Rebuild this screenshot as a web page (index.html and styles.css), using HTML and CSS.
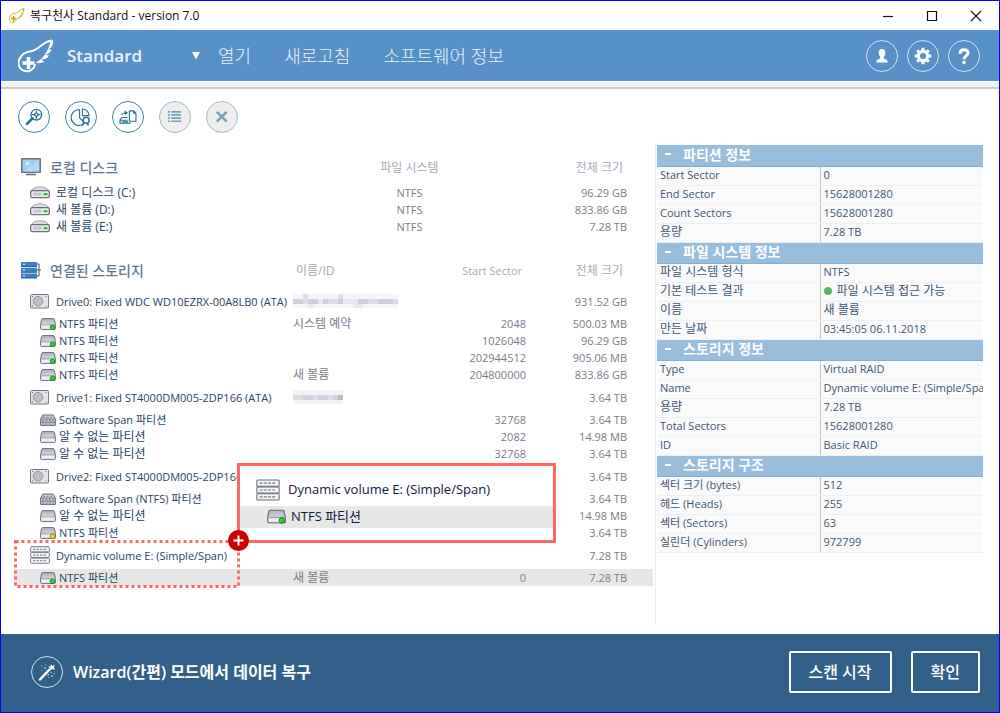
FILE: index.html
```
<!DOCTYPE html>
<html lang="ko">
<head>
<meta charset="utf-8">
<title>복구천사 Standard - version 7.0</title>
<link rel="stylesheet" href="styles.css">
</head>
<body>
<svg class="sprite" aria-hidden="true">
  <defs>
    <linearGradient id="metal" x1="0" y1="0" x2="0" y2="1"><stop offset="0" stop-color="#aab1bb"/><stop offset=".65" stop-color="#d9dce2"/><stop offset="1" stop-color="#e8eaee"/></linearGradient>
  </defs>
  <symbol id="wing" viewBox="0 0 36 34">
    <path d="M2.500 18.500C4 14.500 8 13 13 12.200C22 10.500 24 2.500 34 1.500" fill="none" stroke="currentColor" stroke-width="2"/>
    <path d="M35 1C35.500 6 33.500 9 30.500 10.500L33.500 10.500C32.500 13.500 30 15 27.500 15.800L31 16.500C29 20 26 20.800 22.500 20.500L26 22.300C23.500 24.800 20 24.500 17.500 23.500C23 21 29.500 15 32 4L31 1.500Z" fill="currentColor"/>
    <path d="M3 18A8.300 8.300 0 1 0 17 25" fill="none" stroke="currentColor" stroke-width="2"/>
    <path d="M10.500 18V30M4.500 24H16.500" stroke="currentColor" stroke-width="3.600"/>
  </symbol>
  <symbol id="hdd" viewBox="0 0 20 15">
    <rect x=".5" y=".5" width="18" height="13.500" rx="1" fill="#e3e4e6" stroke="#77797e"/>
    <circle cx="8" cy="7.200" r="4.800" fill="#bcc0c5" stroke="#969aa0"/>
    <path d="M2 2h1v1H2zM2 11.500h1v1H2zM15.500 2h1v1h-1zM15.500 11.500h1v1h-1z" fill="#666"/>
  </symbol>
  <symbol id="part" viewBox="0 0 16 12">
    <path d="M3 .6H13Q14 .6 14.400 1.600L15.400 6.500V10.500Q15.400 11.400 14.500 11.400H1.500Q.6 11.400 .6 10.500V6.500L1.600 1.600Q2 .6 3 .6Z" fill="url(#metal)" stroke="#686f7a"/>
    <path d="M1.200 6.800H14.800" stroke="#9aa0aa"/><path d="M1.500 7.600H14.500V10.500H1.500Z" fill="#eceef1"/>
  </symbol>
  <symbol id="partok" viewBox="0 0 16 12"><use href="#part" width="16" height="12"/><circle cx="12.500" cy="9.300" r="2.300" fill="#1fe01f" stroke="#157a15" stroke-width=".8"/></symbol>
  <symbol id="partwarn" viewBox="0 0 16 12"><use href="#part" width="16" height="12"/><circle cx="12.500" cy="9.300" r="2.300" fill="#ffdc22" stroke="#8d7410" stroke-width=".8"/></symbol>
  <symbol id="span" viewBox="0 0 16 12">
    <path d="M3 1H13L15.400 5V11.400H.6V5Z" fill="#d3d6da" stroke="#626a74"/>
    <path d="M1 5H15M1 8.200H15" stroke="#626a74" stroke-width=".9"/>
    <path d="M3 3.200H13M2 6.700H14M2 10H14" stroke="#6a727c" stroke-width=".9" stroke-dasharray="2.200 1.200"/>
  </symbol>
  <symbol id="rack" viewBox="0 0 20 18">
    <g fill="#f4f5f6" stroke="#69717b" stroke-width=".9"><rect x=".7" y=".7" width="18.600" height="5.200" rx=".8"/><rect x=".7" y="6.400" width="18.600" height="5.200" rx=".8"/><rect x=".7" y="12.100" width="18.600" height="5.200" rx=".8"/></g>
    <path d="M3 3.300H17M3 9H17M3 14.700H17" stroke="#747c86" stroke-dasharray="2.500 1"/>
  </symbol>
  <symbol id="disk" viewBox="0 0 19 12">
    <path d="M1 4.500L4.500 1.200Q9.500 0 14.500 1.200L18 4.500" fill="#dcdce2" stroke="#b0b0b8"/>
    <rect x=".6" y="4.300" width="17.800" height="6.600" rx="1.500" fill="#e9e9ee" stroke="#72727f" stroke-width="1.200"/>
    <path d="M3 7.500H11" stroke="#c7c7d0" stroke-width="3"/><path d="M13 7.600H16.500" stroke="#18c018" stroke-width="2"/>
  </symbol>
</svg>
<div class="window">
  <header class="titlebar">
    <svg class="app-icon" aria-hidden="true"><use href="#wing"/></svg>
    <h1 class="app-title">복구천사 Standard - version 7.0</h1>
    <div class="win-controls">
      <button class="win-btn" aria-label="최소화"><svg viewBox="0 0 12 12"><path d="M1 6.500H11" /></svg></button>
      <button class="win-btn" aria-label="최대화"><svg viewBox="0 0 12 12"><path d="M1.500 1.500H10.500V10.500H1.500Z"/></svg></button>
      <button class="win-btn" aria-label="닫기"><svg viewBox="0 0 12 12"><path d="M1 1L11 11M11 1L1 11"/></svg></button>
    </div>
  </header>
  <div class="menubar">
    <svg class="logo" aria-hidden="true"><use href="#wing"/></svg>
    <div class="edition">
      <select class="edition-select" aria-label="에디션"><option>Standard</option></select>
      <svg class="edition-arrow" viewBox="0 0 8 8" aria-hidden="true"><path d="M0 0H8L4 7.500Z"/></svg>
    </div>
    <nav class="menu">
      <button class="menu-item">열기</button>
      <button class="menu-item">새로고침</button>
      <button class="menu-item">소프트웨어 정보</button>
    </nav>
    <div class="menu-icons">
      <button class="round" aria-label="사용자"><svg viewBox="0 0 32 32"><path d="M16 8.500C18.800 8.500 19.700 10.500 19.500 13C19.400 15 18.500 16 17.800 17V18.400C18.500 19.500 22 19.300 22 22V23H10V22C10 19.300 13.500 19.500 14.200 18.400V17C13.500 16 12.600 15 12.500 13C12.300 10.500 13.200 8.500 16 8.500Z" fill="#fff"/></svg></button>
      <button class="round" aria-label="설정"><svg viewBox="0 0 32 32"><circle cx="16" cy="16" r="5" fill="none" stroke="#fff" stroke-width="3.400"/><path d="M16 7.200V10.500M16 21.500V24.800M7.200 16H10.500M21.500 16H24.800M9.800 9.800L12.200 12.200M19.800 19.800L22.200 22.200M22.200 9.800L19.800 12.200M12.200 19.800L9.800 22.200" stroke="#fff" stroke-width="3.200"/></svg></button>
      <button class="round" aria-label="도움말"><svg viewBox="0 0 32 32"><path d="M11.800 13.500C11.800 10.500 13.500 9.400 16 9.400C18.500 9.400 20.300 10.600 20.300 12.800C20.300 16 16 15.800 16 19.500" fill="none" stroke="#fff" stroke-width="3.200"/><circle cx="16" cy="22.800" r="1.900" fill="#fff"/></svg></button>
    </div>
  </div>
  <div class="divider"></div>
  <div class="toolbar">
    <button class="tool" aria-label="스캔"><svg viewBox="0 0 32 32"><circle cx="18.500" cy="13.500" r="5.700" stroke-width="1.400"/><path d="M18.500 9V18M14 13.500H23"/><circle cx="18.500" cy="13.500" r="1.800" fill="#fff"/><path d="M14.300 17.500L8.500 23.300" stroke-width="2.800" stroke-linecap="round"/></svg></button>
    <button class="tool" aria-label="파티션 찾기"><svg viewBox="0 0 32 32"><path d="M14.500 8A8.500 8.500 0 1 0 18 24M14.500 8V17L18.500 21"/><path d="M17.500 7.500V14.500H24.500A7 7 0 0 0 17.500 7.500Z"/><circle cx="21.500" cy="19.500" r="3.200" stroke-width="1.600"/><path d="M22.500 22.500L24 25M19.300 22L16.800 25" stroke-width="1.800"/></svg></button>
    <button class="tool" aria-label="이미지 열기"><svg viewBox="0 0 32 32"><path d="M17.500 9.500H22L24.500 12V20.500H17.500ZM22 9.500V12H24.500"/><path d="M15.500 16.500H9.500L7.500 19V22.500H19M7.500 19.500H15.500M10 21H16" /><path d="M9.500 14Q10.500 11.500 15 11.500"/><path d="M12.500 9L16 11.500L12.500 14Z" fill="#25719b" stroke="none"/></svg></button>
    <button class="tool" disabled aria-label="목록"><svg viewBox="0 0 32 32"><path d="M8.500 10.500H10.500M8.500 13.800H10.500M8.500 17.200H10.500M8.500 20.500H10.500M12 10.500H22.500M12 13.800H22.500M12 17.200H22.500M12 20.500H22.500" stroke-width="1.800"/></svg></button>
    <button class="tool" disabled aria-label="제거"><svg viewBox="0 0 32 32"><path d="M10.500 10.500L21 21M21 10.500L10.500 21" stroke-width="2.800"/></svg></button>
  </div>
  <main class="content">
    <section class="storage">
      <table class="tree">
        <colgroup><col><col class="c-fs"><col class="c-size"></colgroup>
        <thead><tr>
          <th class="group"><div class="cell head"><svg viewBox="0 0 20 18"><rect x=".8" y=".8" width="18.400" height="13.400" fill="#9fd0f3" stroke="#6d7178" stroke-width="1.500"/><path d="M2 14L18 2V13.500H2Z" fill="#b0daf7"/><circle cx="6.500" cy="5.500" r="1.800" fill="#dff0fc"/><path d="M5 16.500H15" stroke="#6d7178" stroke-width="1.600"/></svg>로컬 디스크</div></th>
          <th class="mid">파일 시스템</th><th class="size">전체 크기</th>
        </tr></thead>
        <tbody>
          <tr><td><div class="cell disk"><svg><use href="#disk"/></svg><span class="ko">로컬 디스크 (C:)</span></div></td><td class="mid">NTFS</td><td class="size">96.29 GB</td></tr>
          <tr><td><div class="cell disk"><svg><use href="#disk"/></svg><span class="ko">새 볼륨 (D:)</span></div></td><td class="mid">NTFS</td><td class="size">833.86 GB</td></tr>
          <tr><td><div class="cell disk"><svg><use href="#disk"/></svg><span class="ko">새 볼륨 (E:)</span></div></td><td class="mid">NTFS</td><td class="size">7.28 TB</td></tr>
        </tbody>
      </table>
      <table class="tree">
        <colgroup><col><col class="c-id"><col class="c-start"><col class="c-size"></colgroup>
        <thead><tr>
          <th class="group"><div class="cell head"><svg viewBox="0 0 20 18"><path d="M16 3H18V15H16M16 9H20" fill="none" stroke="#39506b"/><path d="M0 1H16V5.500H0ZM0 6.800H16V11.300H0ZM0 12.600H16V17H0Z" fill="#3c7fc6"/><path d="M2 3.200H4M2 9H4M2 14.800H4" stroke="#fff"/><path d="M0 5.500H16M0 11.300H16M0 17H16" stroke="#2a5f9b"/></svg>연결된 스토리지</div></th>
          <th class="id">이름/ID</th><th class="start">Start Sector</th><th class="size">전체 크기</th>
        </tr></thead>
        <tbody>
          <tr class="drive"><td><div class="cell disk"><svg><use href="#hdd"/></svg>Drive0: Fixed WDC WD10EZRX-00A8LB0 (ATA)</div></td>
            <td><svg class="mask" width="105" height="14" aria-hidden="true"><path d="M0 0H105V14H0Z" fill="#f6f6f8"/><path d="M0 5H10V10H0ZM15 5H25V10H15ZM30 5H35V10H30ZM45 5H50V10H45ZM65 5H75V10H65ZM85 5H100V10H85Z" fill="#cfcfd9"/><path d="M10 5H15V10H10ZM35 5H45V10H35ZM75 5H85V10H75ZM100 5H105V10H100ZM10 0H15V5H10ZM45 0H50V5H45Z" fill="#dddde6"/><path d="M25 5H30V10H25ZM50 5H65V10H50ZM15 10H20V14H15ZM60 10H70V14H60Z" fill="#e8e8ee"/></svg></td><td></td><td class="size">931.52 GB</td></tr>
          <tr><td><div class="cell part"><svg><use href="#partok"/></svg>NTFS 파티션</div></td><td class="ko">시스템 예약</td><td class="start">2048</td><td class="size">500.03 MB</td></tr>
          <tr><td><div class="cell part"><svg><use href="#partok"/></svg>NTFS 파티션</div></td><td></td><td class="start">1026048</td><td class="size">96.29 GB</td></tr>
          <tr><td><div class="cell part"><svg><use href="#partok"/></svg>NTFS 파티션</div></td><td></td><td class="start">202944512</td><td class="size">905.06 MB</td></tr>
          <tr><td><div class="cell part"><svg><use href="#partok"/></svg>NTFS 파티션</div></td><td class="ko">새 볼륨</td><td class="start">204800000</td><td class="size">833.86 GB</td></tr>
          <tr class="drive"><td><div class="cell disk"><svg><use href="#hdd"/></svg>Drive1: Fixed ST4000DM005-2DP166 (ATA)</div></td>
            <td><svg class="mask" width="50" height="14" aria-hidden="true"><path d="M0 0H50V14H0Z" fill="#f3f3f6"/><path d="M0 5H10V10H0ZM20 5H25V10H20ZM35 5H40V10H35Z" fill="#dcdce3"/><path d="M10 5H20V10H10ZM25 5H35V10H25ZM40 5H45V10H40Z" fill="#d2d2dc"/><path d="M45 5H50V10H45Z" fill="#bcbcc9"/></svg></td><td></td><td class="size">3.64 TB</td></tr>
          <tr><td><div class="cell part"><svg><use href="#span"/></svg>Software Span 파티션</div></td><td></td><td class="start">32768</td><td class="size">3.64 TB</td></tr>
          <tr><td><div class="cell part"><svg><use href="#part"/></svg><span class="ko">알 수 없는 파티션</span></div></td><td></td><td class="start">2082</td><td class="size">14.98 MB</td></tr>
          <tr><td><div class="cell part"><svg><use href="#part"/></svg><span class="ko">알 수 없는 파티션</span></div></td><td></td><td class="start">32768</td><td class="size">3.64 TB</td></tr>
          <tr class="drive"><td><div class="cell disk"><svg><use href="#hdd"/></svg>Drive2: Fixed ST4000DM005-2DP166</div></td><td></td><td></td><td class="size">3.64 TB</td></tr>
          <tr><td><div class="cell part"><svg><use href="#span"/></svg>Software Span (NTFS) 파티션</div></td><td></td><td></td><td class="size">3.64 TB</td></tr>
          <tr><td><div class="cell part"><svg><use href="#part"/></svg><span class="ko">알 수 없는 파티션</span></div></td><td></td><td></td><td class="size">14.98 MB</td></tr>
          <tr><td><div class="cell part"><svg><use href="#partwarn"/></svg>NTFS 파티션</div></td><td></td><td></td><td class="size">3.64 TB</td></tr>
          <tr class="drive"><td><div class="cell disk volume"><svg><use href="#rack"/></svg>Dynamic volume E: (Simple/Span)</div></td><td></td><td></td><td class="size">7.28 TB</td></tr>
          <tr class="selected"><td><div class="cell part"><svg><use href="#partok"/></svg>NTFS 파티션</div></td><td class="ko">새 볼륨</td><td class="start">0</td><td class="size">7.28 TB</td></tr>
        </tbody>
      </table>
      <svg class="marker" aria-hidden="true"><rect x="1.500" y="1.500" width="223" height="45"/></svg>
      <div class="callout">
        <div class="callout-row"><svg class="callout-rack" aria-hidden="true"><use href="#rack"/></svg>Dynamic volume E: (Simple/Span)</div>
        <div class="callout-row callout-selected"><svg class="callout-part" aria-hidden="true"><use href="#partok"/></svg>NTFS 파티션</div>
      </div>
      <svg class="badge" viewBox="0 0 21 21" aria-hidden="true"><circle cx="10.500" cy="10.500" r="10.500" fill="#c00"/><path d="M10.500 5.500V15.500M5.500 10.500H15.500" stroke="#fff" stroke-width="2"/></svg>
    </section>
    <aside class="details">
      <table class="props">
        <colgroup><col><col></colgroup>
        <tbody>
          <tr><th colspan="2" class="bar"><button class="bar-btn"><span class="sign"></span>파티션 정보</button></th></tr>
          <tr><th>Start Sector</th><td>0</td></tr>
          <tr><th>End Sector</th><td>15628001280</td></tr>
          <tr><th>Count Sectors</th><td>15628001280</td></tr>
          <tr><th class="ko">용량</th><td>7.28 TB</td></tr>
        </tbody>
        <tbody>
          <tr><th colspan="2" class="bar"><button class="bar-btn"><span class="sign"></span>파일 시스템 정보</button></th></tr>
          <tr><th class="ko">파일 시스템 형식</th><td>NTFS</td></tr>
          <tr><th class="ko">기본 테스트 결과</th><td class="ko"><span class="dot"></span>파일 시스템 접근 가능</td></tr>
          <tr><th class="ko">이름</th><td class="ko">새 볼륨</td></tr>
          <tr><th class="ko">만든 날짜</th><td>03:45:05 06.11.2018</td></tr>
        </tbody>
        <tbody>
          <tr><th colspan="2" class="bar"><button class="bar-btn"><span class="sign"></span>스토리지 정보</button></th></tr>
          <tr><th>Type</th><td>Virtual RAID</td></tr>
          <tr><th>Name</th><td>Dynamic volume E: (Simple/Span)</td></tr>
          <tr><th class="ko">용량</th><td>7.28 TB</td></tr>
          <tr><th>Total Sectors</th><td>15628001280</td></tr>
          <tr><th>ID</th><td>Basic RAID</td></tr>
        </tbody>
        <tbody>
          <tr><th colspan="2" class="bar"><button class="bar-btn"><span class="sign"></span>스토리지 구조</button></th></tr>
          <tr><th>섹터 크기 (bytes)</th><td>512</td></tr>
          <tr><th>헤드 (Heads)</th><td>255</td></tr>
          <tr><th>섹터 (Sectors)</th><td>63</td></tr>
          <tr><th>실린더 (Cylinders)</th><td>972799</td></tr>
        </tbody>
      </table>
    </aside>
  </main>
  <footer class="footer">
    <button class="wizard"><span class="round"><svg viewBox="0 0 32 32"><path d="M8.500 24L18.500 13.500" stroke="#fff" stroke-width="2.600" stroke-linecap="round"/><path d="M20.500 7.500L21.800 9.500L24.500 8.500L23.200 11L24.500 13.500L21.500 12.700L19.500 14.500L19.300 11.800L17 10.500L19.700 9.800Z" fill="#fff"/><path d="M10 9h1v1h-1zM13 11h1.500v1.500H13zM10 14h1v1h-1zM14 8h1v1h-1zM16.500 18h1.500v1.500h-1.500zM20 16h1v1h-1zM20.500 19.500h1.500v1.500h-1.500zM17 21.500h1v1h-1zM23 17h1v1h-1zM15 15h1v1h-1z" fill="#d5e1ec"/></svg></span>Wizard(간편) 모드에서 데이터 복구</button>
    <div class="actions"><button class="action">스캔 시작</button><button class="action">확인</button></div>
  </footer>
</div>
</body>
</html>
```
FILE: styles.css
```
* { box-sizing: border-box; }
body {
  margin: 0;
  background: #fff;
  font: 11px/17px "Open Sans", "Noto Sans CJK KR", sans-serif;
  color: #28465f;
}
button, select {
  margin: 0;
  padding: 0;
  border: 0;
  background: none;
  font: inherit;
  color: inherit;
}
button svg { display: block; }
.sprite { position: absolute; width: 0; height: 0; }
.ko { font-size: 12px; }
.window {
  min-height: 100vh;
  display: flex;
  flex-direction: column;
  border: 1px solid #00f;
}

.titlebar {
  height: 29px;
  display: flex;
  align-items: center;
  gap: 5px;
  padding: 0 17px 0 8px;
  color: #111;
}
.app-icon { width: 16px; height: 15px; color: #c4ab1b; }
.app-title { margin: 0; font-size: 12px; font-weight: 400; }
.win-controls { margin-left: auto; display: flex; gap: 32px; }
.win-btn svg { width: 12px; height: 12px; fill: none; stroke: #111; stroke-width: 1.2; }

.menubar {
  height: 51px;
  display: flex;
  align-items: center;
  padding: 0 19px 0 17px;
  background: #5890c8;
  color: #eaf2fa;
}
.logo { width: 36px; height: 34px; color: #fff; }
.edition { display: flex; align-items: center; margin-left: 13px; }
.edition-select {
  width: 125px;
  appearance: none;
  font-size: 17px;
  line-height: 24px;
  font-weight: 600;
}
.edition-arrow { width: 8px; height: 8px; fill: #fff; }
.menu { display: flex; gap: 33px; margin-left: 18px; }
.menu-item { font-size: 18px; line-height: 24px; font-weight: 300; }
.menu-icons { display: flex; gap: 9px; margin-left: auto; }
.round {
  width: 32px;
  height: 32px;
  border: 1px solid #d3e2f1;
  border-radius: 50%;
}
.divider {
  height: 8px;
  border-top: 1px solid #fff;
  border-bottom: 2px solid #ccc;
  background: #f1f1f1;
}

.toolbar { display: flex; gap: 15px; padding: 12px 17px 0; }
.tool {
  width: 32px;
  height: 32px;
  border: 1px solid #3e82a5;
  border-radius: 50%;
}
.tool svg { fill: none; stroke: #25719b; stroke-width: 1.2; }
.tool:disabled { background: #eee; border-color: #9dbccb; }
.tool:disabled svg { stroke: #76a3b9; }

.content {
  flex: 1;
  display: flex;
  gap: 2px;
  padding: 12px 16px 9px 13px;
}
.storage { position: relative; flex: 1; padding-top: 5px; }
.tree {
  width: 100%;
  border-collapse: collapse;
  table-layout: fixed;
  color: #7b7b8b;
}
.tree + .tree { margin-top: 18px; }
.tree th, .tree td { padding: 0; height: 17px; text-align: left; white-space: nowrap; }
.tree th { height: 34px; font-size: 12px; font-weight: 400; color: #a9a9b8; }
.tree th.start { font-size: 11px; padding-right: 4px; }
.tree th.size { padding-right: 30px; }
.tree th.id { padding-left: 3px; }
.tree th.group { font-size: 14px; font-weight: 500; color: #62778b; }
.tree .mid { text-align: center; }
.tree .start { text-align: right; }
.tree .size { text-align: right; padding-right: 26px; }
.tree .drive td { height: 28px; }
.tree .selected { background: #e7e7e7; }
.c-fs { width: 233px; }
.c-id { width: 137px; }
.c-start { width: 96px; }
.c-size { width: 127px; }
.cell { display: flex; align-items: center; color: #28465f; }
.head { gap: 9px; padding-left: 7px; color: inherit; }
.head svg { width: 20px; height: 18px; }
.disk { gap: 6px; padding-left: 16px; }
.disk svg { width: 20px; height: 15px; }
.volume svg { height: 18px; }
.part { gap: 3px; padding-left: 26px; }
.part svg { width: 16px; height: 12px; }
.mask { display: block; }

.marker {
  position: absolute;
  left: 0;
  top: 395px;
  width: 226px;
  height: 48px;
  fill: none;
  stroke: #f66;
  stroke-width: 3px;
  stroke-dasharray: 3 3;
}
.callout {
  position: absolute;
  left: 223px;
  top: 318px;
  width: 319px;
  height: 80px;
  padding-top: 13px;
  border: 3px solid #f66;
  background: #fff;
  color: #10203c;
  font-size: 13px;
}
.callout-row { display: flex; align-items: center; gap: 8px; height: 22px; padding: 0 0 1px 16px; }
.callout-selected { gap: 5px; margin-top: 5px; padding: 0 0 2px 27px; background: #e7e7e7; }
.callout-rack { width: 24px; height: 22px; }
.callout-part { width: 19px; height: 15px; }
.badge { position: absolute; left: 214px; top: 385px; width: 21px; height: 21px; }

.details {
  width: 328px;
  padding-left: 1px;
  border-left: 1px solid #ececec;
}
.props {
  width: 100%;
  border-collapse: collapse;
  table-layout: fixed;
  color: #3d5873;
}
.props th, .props td {
  height: 19px;
  padding: 0 3px 2px;
  border-bottom: 1px solid #efefef;
  background: #fafafa;
  font-weight: 400;
  line-height: 16px;
  text-align: left;
  white-space: nowrap;
  overflow: hidden;
}
.props td { padding-right: 0; border-left: 1px solid #c6c6c6; }
.props .bar {
  height: 21px;
  padding: 0 8px 2px;
  border-bottom: 1px solid #82b0cf;
  background: #98bddd;
  color: #fff;
}
.bar-btn { display: flex; align-items: center; gap: 12px; font-size: 14px; line-height: 17px; font-weight: 700; }
.sign { width: 6px; height: 2px; background: #fff; }
.dot {
  display: inline-block;
  width: 8px;
  height: 8px;
  margin-right: 5px;
  border-radius: 50%;
  background: #5cb567;
}

.footer {
  height: 78px;
  display: flex;
  align-items: center;
  justify-content: space-between;
  padding: 0 19px 2px 30px;
  background: #31608a;
  color: #fff;
}
.wizard { display: flex; align-items: center; gap: 10px; font-size: 16px; line-height: 24px; font-weight: 600; }
.actions { display: flex; gap: 19px; }
.action {
  height: 42px;
  padding: 0 18px;
  border: 2px solid #fff;
  border-radius: 2px;
  font-size: 16px;
  font-weight: 500;
}
```
